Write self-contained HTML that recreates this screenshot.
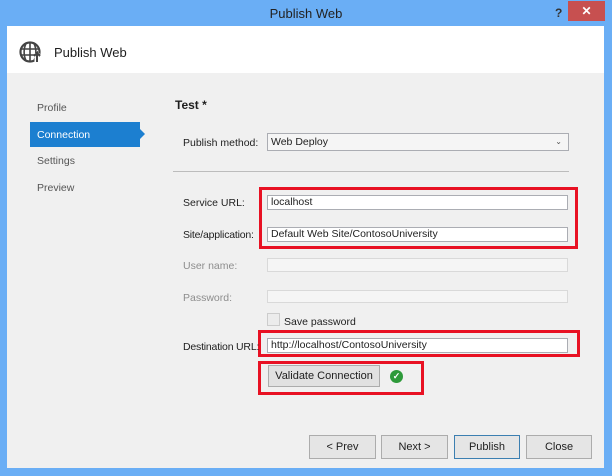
<!DOCTYPE html>
<html><head><style>
body{margin:0;width:612px;height:476px;background:#6aaef5;font-family:"Liberation Sans",sans-serif;font-size:10.5px;color:#1e1e1e;position:relative;overflow:hidden}
.a{position:absolute}
.in{position:absolute;background:#fff;border:1px solid #abadb3;box-sizing:border-box;height:15px;padding-left:3px;line-height:13px;font-size:10.5px}
.dis{background:#f5f5f5;border-color:#d9d9d9}
.red{position:absolute;border:3px solid #e81123;box-sizing:border-box}
.btn{position:absolute;background:#e5e5e5;border:1px solid #acacac;box-sizing:border-box;height:24px;text-align:center;line-height:22px;font-size:11px}
.lbl{position:absolute;left:183px}
.gray{color:#8d8d8d}
</style></head><body>
<div class="a" style="left:0;top:0;width:612px;height:26px;text-align:center;line-height:28px;font-size:13px;color:#222">Publish Web</div>
<div class="a" style="left:555px;top:6px;font-size:12px;font-weight:bold;color:#333">?</div>
<div class="a" style="left:568px;top:1px;width:37px;height:20px;background:#c75050;color:#fff;text-align:center;line-height:20px;font-size:12px;font-weight:bold">✕</div>
<div class="a" style="left:7px;top:26px;width:597px;height:442px;background:#f0f0f0"></div>
<div class="a" style="left:7px;top:26px;width:597px;height:47px;background:#fff"></div>
<svg class="a" style="left:19px;top:40px" width="24" height="24" viewBox="0 0 24 24"><circle cx="11" cy="12" r="9.5" fill="none" stroke="#444" stroke-width="2.2"/><path d="M2 9h18M2 15h18M11 2.5v19M7 3.5c-2.5 5-2.5 12 0 17M15 3.5c2.5 5 2.5 12 0 17" stroke="#444" stroke-width="1.6" fill="none"/><path d="M18 22v-9" stroke="#fff" stroke-width="5"/><path d="M18 22v-9l-3 3M18 13l3 3" stroke="#444" stroke-width="2" fill="none"/></svg>
<div class="a" style="left:54px;top:45px;font-size:13px">Publish Web</div>
<div class="a" style="left:37px;top:102px;color:#555">Profile</div>
<div class="a" style="left:30px;top:122px;width:110px;height:25px;background:#1c7fd0"></div>
<div class="a" style="left:140px;top:129px;border-left:5px solid #1c7fd0;border-top:5px solid transparent;border-bottom:5px solid transparent"></div>
<div class="a" style="left:37px;top:129px;color:#fff">Connection</div>
<div class="a" style="left:37px;top:155px;color:#555">Settings</div>
<div class="a" style="left:37px;top:182px;color:#555">Preview</div>
<div class="a" style="left:175px;top:98px;font-weight:bold;font-size:12px">Test *</div>
<div class="lbl" style="top:137px">Publish method:</div>
<div class="in" style="left:267px;top:133px;width:302px;height:18px;background:#f5f5f5;line-height:16px">Web Deploy<span style="position:absolute;right:6px;font-size:8px;color:#555">⌄</span></div>
<div class="a" style="left:173px;top:171px;width:396px;height:1px;background:#bcbcbc"></div>
<div class="red" style="left:259px;top:187px;width:319px;height:62px"></div>
<div class="lbl" style="top:197px">Service URL:</div>
<div class="in" style="left:267px;top:195px;width:301px">localhost</div>
<div class="lbl" style="top:229px;letter-spacing:-0.2px">Site/application:</div>
<div class="in" style="left:267px;top:227px;width:301px">Default Web Site/ContosoUniversity</div>
<div class="lbl gray" style="top:260px">User name:</div>
<div class="in dis" style="left:267px;top:258px;width:301px;height:14px"></div>
<div class="lbl gray" style="top:292px">Password:</div>
<div class="in dis" style="left:267px;top:290px;width:301px;height:13px"></div>
<div class="a" style="left:267px;top:313px;width:11px;height:11px;border:1px solid #ccc;background:#ececec"></div>
<div class="a" style="left:284px;top:316px">Save password</div>
<div class="red" style="left:258px;top:330px;width:322px;height:27px"></div>
<div class="lbl" style="top:341px;letter-spacing:-0.2px">Destination URL:</div>
<div class="in" style="left:267px;top:338px;width:301px">http://localhost/ContosoUniversity</div>
<div class="red" style="left:258px;top:361px;width:166px;height:34px"></div>
<div class="btn" style="left:268px;top:365px;width:112px;height:22px;line-height:20px;background:#e1e1e1">Validate Connection</div>
<div class="a" style="left:390px;top:370px;width:13px;height:13px;border-radius:50%;background:#2e9a3a;color:#fff;font-size:9px;text-align:center;line-height:13px;font-weight:bold">✓</div>
<div class="btn" style="left:309px;top:435px;width:67px">&lt; Prev</div>
<div class="btn" style="left:381px;top:435px;width:67px">Next &gt;</div>
<div class="btn" style="left:454px;top:435px;width:66px;border-color:#3c7fb1">Publish</div>
<div class="btn" style="left:526px;top:435px;width:66px">Close</div>
</body></html>
